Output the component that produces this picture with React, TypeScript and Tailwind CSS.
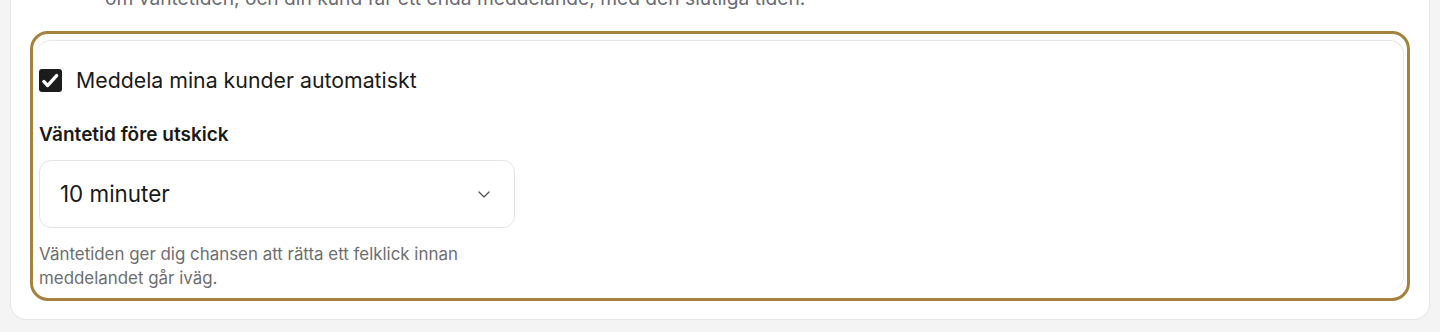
import React from "react";

export default function App() {
  return (
    <div className="h-[332px] w-full overflow-hidden bg-[#f4f4f4] px-[10px] font-['Inter',sans-serif]">
      <div className="flex h-[320px] flex-col rounded-b-[16px] border border-t-0 border-[#e5e5e5] bg-white">
        <p className="ml-[94px] -mt-[16px] whitespace-nowrap text-[19.2px] leading-[28px] text-[#6b6b73]">
          om väntetiden, och din kund får ett enda meddelande, med den slutliga tiden.
        </p>
        <div className="mx-[19px] mt-[19px] h-[270px] rounded-[18px] border-[3px] border-[#a6823f]">
          <div className="ml-[4px] mr-[3px] mt-[6px] h-[250px] rounded-[14px] border-t border-r border-[#e6e6e6] pl-[2px]">
            <label className="mt-[27px] flex items-center gap-[14px]">
              <span className="flex h-[23px] w-[23px] items-center justify-center rounded-[3px] bg-[#1c1c1c]">
                <svg viewBox="0 0 23 23" className="h-[23px] w-[23px]" fill="none" stroke="white" strokeWidth="3.3" strokeLinecap="round" strokeLinejoin="round">
                  <path d="M4.8 12.4L8.6 16.6L17.6 6.6" />
                </svg>
              </span>
              <span className="text-[21.3px] leading-[24px] text-[#1a1a1a]">Meddela mina kunder automatiskt</span>
            </label>
            <div className="mt-[31px] text-[19px] font-semibold leading-[24px] text-[#1a1a1a]">Väntetid före utskick</div>
            <div className="mt-[13px] flex h-[68px] w-[476px] items-center justify-between rounded-[12px] border border-[#e3e3e3] pl-[20px] pr-[20px]">
              <span className="text-[22.4px] text-[#1a1a1a]">10 minuter</span>
              <svg viewBox="0 0 24 24" className="h-[20px] w-[20px]" fill="none" stroke="#555" strokeWidth="1.6" strokeLinecap="round" strokeLinejoin="round">
                <path d="M6 9.5l6 6 6-6" />
              </svg>
            </div>
            <p className="mt-[14px] w-[476px] text-[16.9px] leading-[24px] text-[#6e6e6e]">
              Väntetiden ger dig chansen att rätta ett felklick innan meddelandet går iväg.
            </p>
          </div>
        </div>
      </div>
    </div>
  );
}
